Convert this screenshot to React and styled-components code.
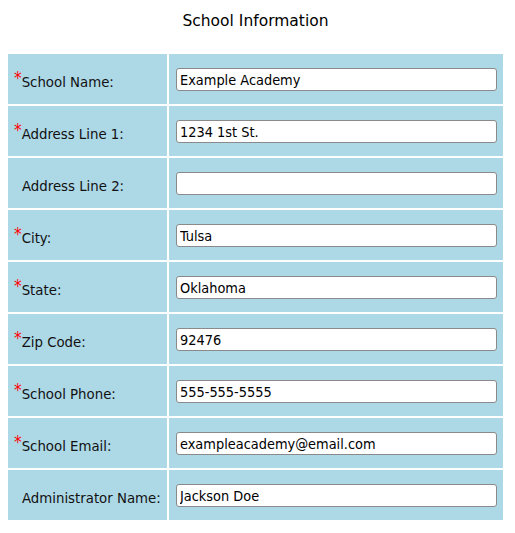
import React from "react";
import styled, { createGlobalStyle } from "styled-components";

const Global = createGlobalStyle`
  body { margin: 8px; font-family: "DejaVu Sans Condensed", "DejaVu Sans", Verdana, sans-serif; background: #fff; color: #000; }
`;

const Title = styled.h1`
  margin: 0;
  width: 495px;
  height: 46px;
  padding-top: 2px;
  box-sizing: border-box;
  text-align: center;
  font-family: "DejaVu Sans", Verdana, sans-serif;
  font-size: 15.5px;
  font-weight: normal;
  line-height: 22px;
`;

const Table = styled.div`
  display: grid;
  grid-template-columns: 159px 334px;
  column-gap: 2px;
  row-gap: 2px;
  width: 495px;
`;

const LabelCell = styled.div`
  background: #add8e6;
  height: 50px;
  display: flex;
  align-items: center;
  padding: 4px 0 0 ${(p) => (p.$required ? 6 : 14)}px;
  box-sizing: border-box;
  font-size: 14.8px;
  color: #111;
  white-space: nowrap;
`;

const Star = styled.span`
  color: #ff0000;
  font-size: 17px;
  margin-top: -6px;
`;

const ValueCell = styled.div`
  background: #add8e6;
  height: 50px;
  display: flex;
  align-items: center;
  padding: 1px 6px 0 7px;
  box-sizing: border-box;
`;

const Input = styled.input`
  width: 100%;
  height: 23px;
  box-sizing: border-box;
  border: 1px solid #8a8a8a;
  border-radius: 3px;
  padding: 0 3px;
  font-family: "DejaVu Sans Condensed", "DejaVu Sans", Verdana, sans-serif;
  font-size: 14.4px;
  color: #000;
  background: #fff;
  outline: none;
`;

const rows = [
  ["School Name:", "Example Academy", true],
  ["Address Line 1:", "1234 1st St.", true],
  ["Address Line 2:", "", false],
  ["City:", "Tulsa", true],
  ["State:", "Oklahoma", true],
  ["Zip Code:", "92476", true],
  ["School Phone:", "555-555-5555", true],
  ["School Email:", "exampleacademy@email.com", true],
  ["Administrator Name:", "Jackson Doe", false],
];

export default function App() {
  return (
    <>
      <Global />
      <Title>School Information</Title>
      <Table>
        {rows.map(([label, value, req]) => (
          <React.Fragment key={label}>
            <LabelCell $required={req}>
              {req && <Star>*</Star>}
              {label}
            </LabelCell>
            <ValueCell>
              <Input defaultValue={value} />
            </ValueCell>
          </React.Fragment>
        ))}
      </Table>
    </>
  );
}
